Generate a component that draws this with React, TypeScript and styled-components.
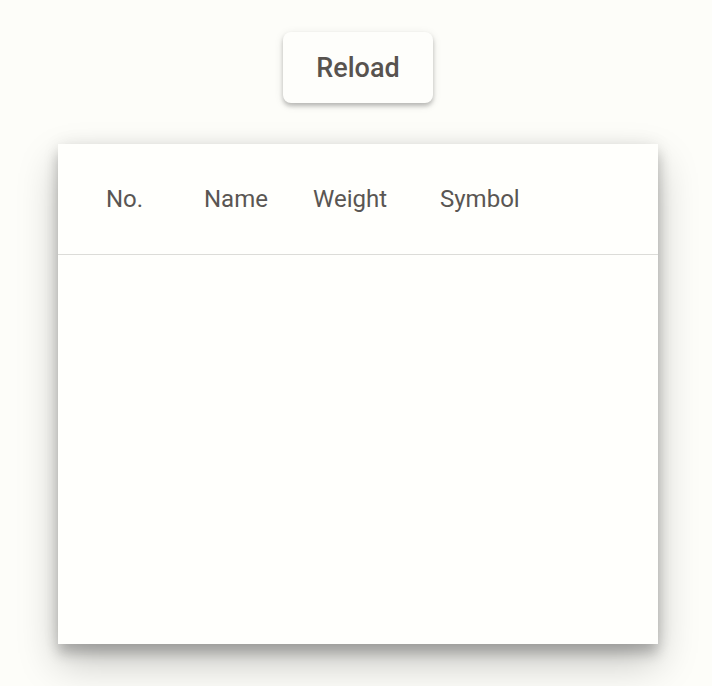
import React from "react";
import styled, { createGlobalStyle } from "styled-components";

const Global = createGlobalStyle`
  html, body {
    margin: 0;
    padding: 0;
    background: #fdfdf9;
    font-family: Roboto, "Liberation Sans", sans-serif;
  }
`;

const Page = styled.div`
  display: flex;
  flex-direction: column;
  align-items: center;
  padding: 32px 0 42px 4px;
  gap: 41px;
  min-height: 686px;
  box-sizing: border-box;
`;

const ReloadButton = styled.button`
  width: 150px;
  height: 71px;
  border: none;
  border-radius: 8px;
  background: #fefefb;
  color: #58534f;
  font-family: Roboto, "Liberation Sans", sans-serif;
  font-size: 27px;
  font-weight: 500;
  box-shadow: 0 3px 4px rgba(0, 0, 0, 0.22), 0 2px 10px rgba(0, 0, 0, 0.1);
  cursor: pointer;
`;

const Card = styled.div`
  flex: none;
  width: 600px;
  height: 500px;
  background: #fffffc;
  box-shadow: 0 19px 38px rgba(0, 0, 0, 0.22), 0 10px 12px rgba(0, 0, 0, 0.2),
    0 0 16px rgba(0, 0, 0, 0.08);
`;

const HeaderRow = styled.div`
  display: grid;
  grid-template-columns: 98px 109px 127px auto;
  align-items: center;
  height: 110px;
  padding-left: 48px;
  border-bottom: 1px solid #dcdcd8;
`;

const HeaderCell = styled.div`
  font-size: 24px;
  color: #5a5653;
  white-space: nowrap;
`;

export default function App() {
  return (
    <>
      <Global />
      <Page>
        <ReloadButton>Reload</ReloadButton>
        <Card>
          <HeaderRow>
            <HeaderCell>No.</HeaderCell>
            <HeaderCell>Name</HeaderCell>
            <HeaderCell>Weight</HeaderCell>
            <HeaderCell>Symbol</HeaderCell>
          </HeaderRow>
        </Card>
      </Page>
    </>
  );
}
